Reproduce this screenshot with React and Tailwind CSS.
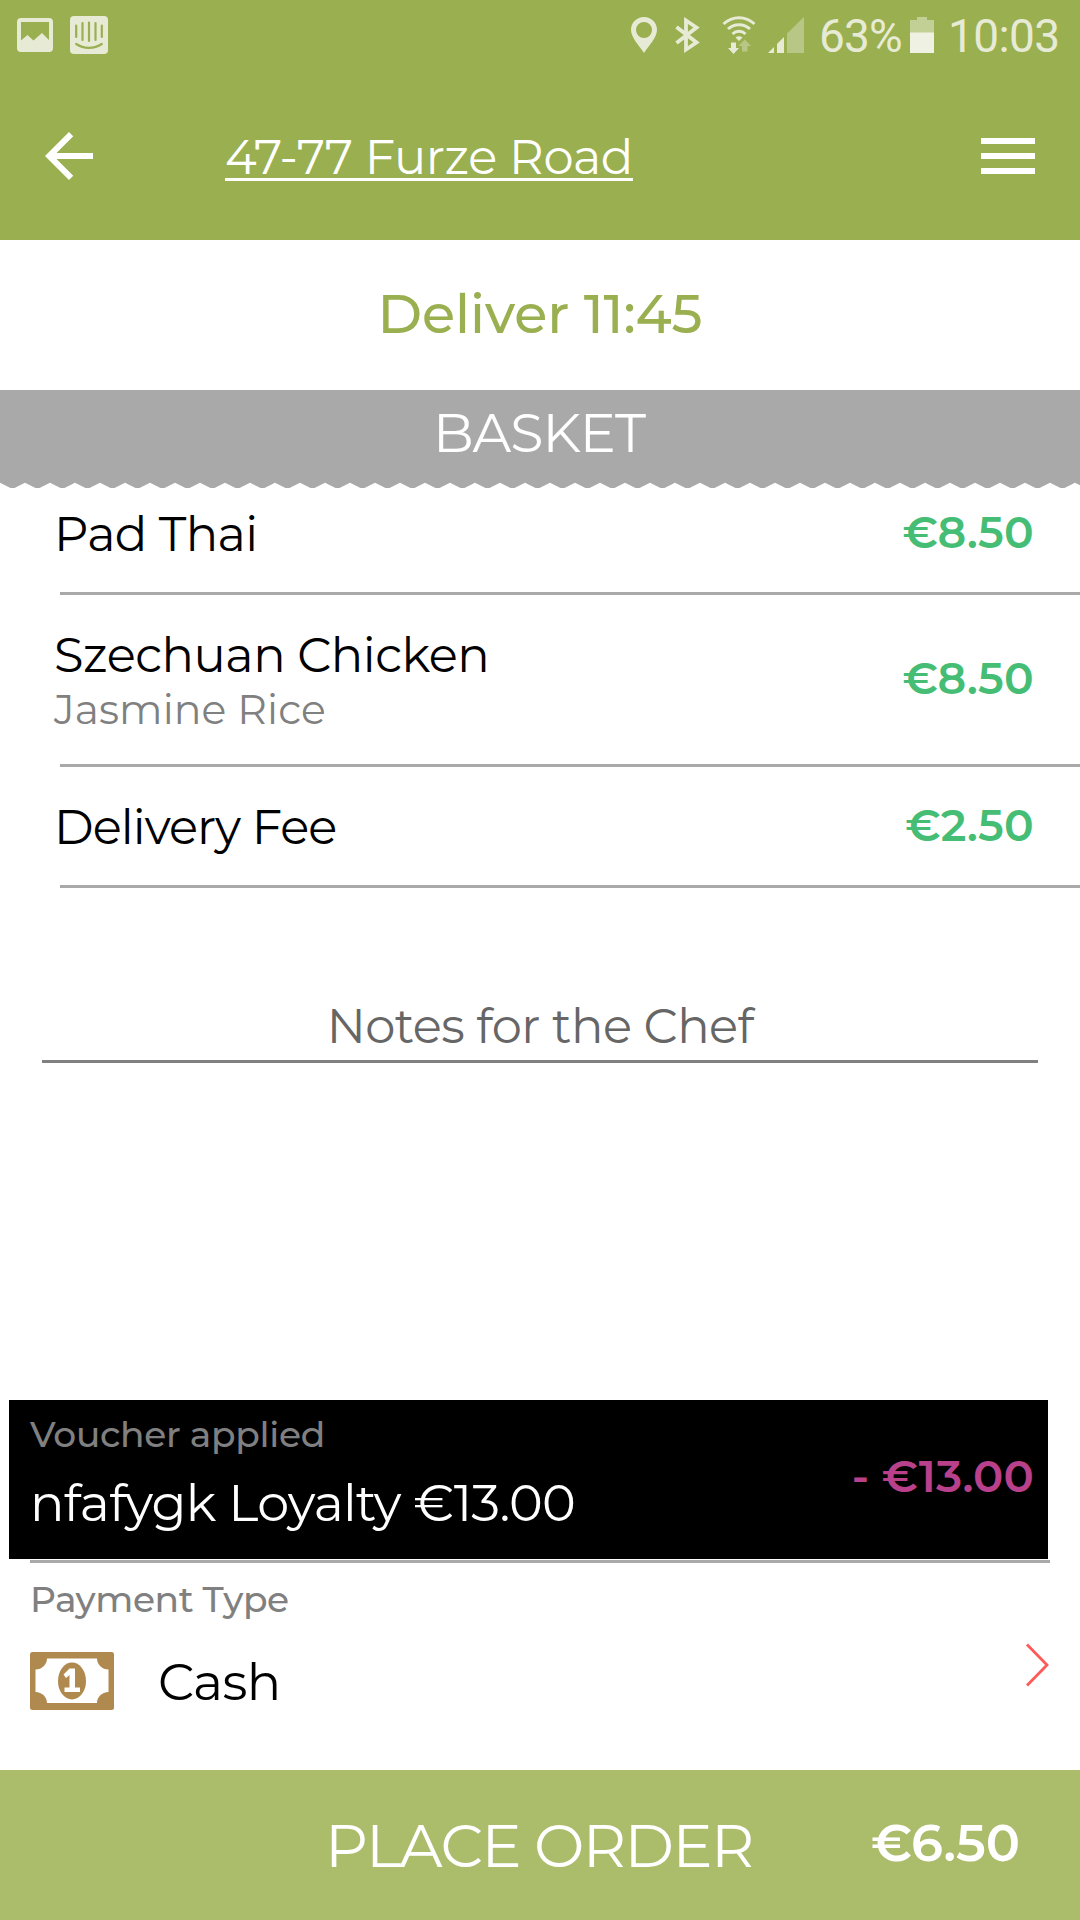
import { Fragment } from "react";

const basketItems = [
  {
    name: "Pad Thai",
    price: "€8.50",
    row: "h-[104px] pb-[13px]",
    nameStyle: "tracking-[-0.6px]",
    priceStyle: "pb-[3px]",
  },
  {
    name: "Szechuan Chicken",
    extra: "Jasmine Rice",
    price: "€8.50",
    row: "h-[169px] pb-[2px]",
    nameStyle: "tracking-[-0.45px] pt-[5px]",
    priceStyle: "pb-px",
  },
  {
    name: "Delivery Fee",
    price: "€2.50",
    row: "h-[118px] pb-0",
    nameStyle: "tracking-[-0.95px] pt-[2px]",
    priceStyle: "pb-[2px]",
  },
];

function StatusBar() {
  return (
    <div className="flex h-[72px] items-start justify-between pl-[17px] pr-[20px] pt-[15px] text-[#e7ebd5]">
      <div className="flex items-start gap-[17px]">
        {/* Picture notification */}
        <svg className="mt-[3px]" width="36" height="34" viewBox="0 0 36 34" fill="currentColor">
          <path
            fillRule="evenodd"
            d="M4 0h28a4 4 0 0 1 4 4v26a4 4 0 0 1-4 4H4a4 4 0 0 1-4-4V4a4 4 0 0 1 4-4zM4 4v18.500l6.500-5.500 6 5.500 8.500-7.500 7 7V4z"
          />
        </svg>
        {/* Chat notification */}
        <svg className="mt-[1px]" width="38" height="38" viewBox="0 0 38 38">
          <rect width="38" height="38" rx="4" fill="currentColor" />
          <g stroke="#9aaf50" strokeWidth="2.200" strokeLinecap="round" fill="none">
            <path d="M6.200 9.500v11.500M12.500 7v17M19 6.500v18.500M25.500 7v17M31.800 9.500v11.500" />
            <path d="M6.200 28c7.500 5.200 18 5.200 25.600 0" />
          </g>
        </svg>
      </div>
      <div className="flex items-start">
        {/* Location */}
        <svg className="mt-[2px]" width="26" height="36" viewBox="0 0 26 36" fill="currentColor">
          <path
            fillRule="evenodd"
            d="M13 0C5.800 0 0 5.600 0 12.800 0 20.500 8 28.500 13 36c5-7.500 13-15.500 13-23.200C26 5.600 20.200 0 13 0zm0 5a8 8 0 1 1 0 16 8 8 0 0 1 0-16z"
          />
        </svg>
        {/* Bluetooth */}
        <svg className="ml-[17px] mt-[2px]" width="26" height="36" viewBox="0 0 26 36">
          <path
            d="M2.500 10l20 15.500L12 32.500v-29l10.500 7L2.500 26"
            fill="none"
            stroke="currentColor"
            strokeWidth="3.800"
          />
        </svg>
        {/* Wifi with traffic arrows */}
        <svg className="ml-[22px] mt-[1px]" width="34" height="38" viewBox="0 0 34 38">
          <g fill="none" stroke="currentColor" strokeWidth="3">
            <path d="M1.500 8C10.500-.500 23.500-.500 32.500 8" />
            <path d="M6 13c6-5.700 16-5.700 22 0" />
            <path d="M10.500 18c3.800-3.600 9.200-3.600 13 0" />
          </g>
          <path d="M13.500 21.500c2-1.800 5-1.800 7 0L17 25z" fill="currentColor" />
          <path d="M9 26.500h5V32h3l-5.500 6L6 32h3z" fill="currentColor" />
          <path d="M20 35.500V30h-3.500l6.200-6.500L29 30h-3.500v5.500z" fill="#b9c786" />
        </svg>
        {/* Mobile signal */}
        <svg className="ml-[11px] mt-[2px]" width="38" height="36" viewBox="0 0 38 36">
          <path d="M1 36l6-6v6z" fill="currentColor" />
          <path d="M10 36V27l7-7v16z" fill="currentColor" />
          <path d="M20 36V16.500L37 0v36z" fill="#b9c786" />
        </svg>
        <span className="ml-[14px] w-[91px] whitespace-nowrap font-['Roboto',sans-serif] text-[46px] leading-[43px] tracking-[-0.8px]">
          63%
        </span>
        {/* Battery */}
        <svg className="mt-[2px]" width="24" height="36" viewBox="0 0 24 36">
          <path d="M7 0h10v3h7v13H0V3h7z" fill="#c2cf95" />
          <path d="M0 15.500h24V36H0z" fill="#eff1e3" />
        </svg>
        <span className="ml-[14px] w-[112px] whitespace-nowrap font-['Roboto',sans-serif] text-[46px] leading-[43px] tracking-[-0.6px]">
          10:03
        </span>
      </div>
    </div>
  );
}

function Header() {
  return (
    <header className="h-[240px] bg-[#9aaf50] text-white">
      <StatusBar />
      <div className="flex h-[168px] items-center pl-[33px] pr-[36px]">
        <svg width="72" height="72" viewBox="0 0 24 24" fill="currentColor">
          <path d="M20 11H7.830l5.590-5.590L12 4l-8 8 8 8 1.410-1.410L7.830 13H20z" />
        </svg>
        <h1 className="ml-[120px] flex-1 whitespace-nowrap pt-[2px] text-[48px] font-[370] leading-[60px] tracking-[-0.4px] underline decoration-[3px] underline-offset-[4px] [text-decoration-skip-ink:none]">
          47-77 Furze Road
        </h1>
        <svg width="72" height="72" viewBox="0 0 24 24" fill="currentColor">
          <path d="M3 6h18v2H3zM3 11h18v2H3zM3 16h18v2H3z" />
        </svg>
      </div>
    </header>
  );
}

function BasketTitle() {
  return (
    <div className="h-[98px]">
      <h2 className="h-[92px] bg-[#a9a9a9] pb-[6px] pr-[2px] text-center text-[54px] leading-[86px] tracking-[-1px] text-white">
        BASKET
      </h2>
      {/* Torn paper edge */}
      <svg className="block" width="1080" height="6" viewBox="0 0 1080 6">
        <defs>
          <pattern id="torn" width="25" height="6" patternUnits="userSpaceOnUse">
            <path d="M0 0h25v.800L14.500 6h-4L0 .800z" fill="#a9a9a9" />
          </pattern>
        </defs>
        <rect width="1080" height="6" fill="url(#torn)" />
      </svg>
    </div>
  );
}

function Basket() {
  return (
    <div>
      {basketItems.map((item, index) => (
        <Fragment key={index}>
          <div className={`flex items-center justify-between pl-[54px] pr-[46px] ${item.row}`}>
            <div className="whitespace-nowrap">
              <p className={`text-[48px] leading-[56px] text-black ${item.nameStyle}`}>
                {item.name}
              </p>
              {item.extra && (
                <p className="text-[41px] leading-[52px] tracking-[0.1px] text-[#808080]">
                  {item.extra}
                </p>
              )}
            </div>
            <span
              className={`text-[44px] font-semibold leading-[50px] tracking-[0.3px] text-[#45bd74] ${item.priceStyle}`}
            >
              {item.price}
            </span>
          </div>
          <div className="ml-[60px] h-[3px] bg-[#a9a9a9]" />
        </Fragment>
      ))}
    </div>
  );
}

function Voucher() {
  return (
    <div className="ml-[9px] mr-[32px] flex h-[159px] justify-between bg-black pl-[21px] pr-[14px]">
      <div className="whitespace-nowrap pt-[14px]">
        <p className="text-[36px] font-medium leading-[40px] tracking-[-0.3px] text-[#808080]">
          Voucher applied
        </p>
        <p className="mt-[19px] text-[51px] leading-[60px] tracking-[-0.7px] text-white">
          nfafygk Loyalty €13.00
        </p>
      </div>
      <span className="pt-[46px] text-[45px] font-semibold leading-[60px] tracking-[0.2px] text-[#b9408a]">
        - €13.00
      </span>
    </div>
  );
}

function PaymentType() {
  return (
    <div className="h-[207px] pl-[30px] pr-[31px] pt-[16px]">
      <p className="text-[36px] font-medium leading-[40px] tracking-[-0.4px] text-[#808080]">
        Payment Type
      </p>
      <div className="mt-[25px] flex h-[76px] items-start">
        <svg className="mt-[8px]" width="84" height="58" viewBox="0 0 84 58">
          <rect width="84" height="58" rx="2.500" fill="#b0894f" />
          <path
            d="M17 6.500h50c0 6 5 11 11.500 11v22.500c-6.500 0-11.500 5-11.500 11H17c0-6-5-11-11.500-11V17.500C12 17.500 17 12.500 17 6.500z"
            fill="#fff"
          />
          <ellipse cx="42" cy="29" rx="14" ry="18.500" fill="#b0894f" />
          <path d="M39.500 16.500H45V35.500h5V40H34.500v-4.500h5V23l-3.500 3-2.500-3.500z" fill="#fff" />
        </svg>
        <span className="ml-[44px] flex-1 text-[51px] leading-[76px] tracking-[-0.7px] text-black">
          Cash
        </span>
        <svg className="-mt-px" width="24" height="44" viewBox="0 0 24 44">
          <path d="M2 1.500L22 22 2 42.500" fill="none" stroke="#ff5a5a" strokeWidth="2.800" />
        </svg>
      </div>
    </div>
  );
}

export default function App() {
  return (
    <div className="flex h-[1920px] w-[1080px] flex-col overflow-hidden bg-white font-['Montserrat','Inter',sans-serif]">
      <Header />
      <p className="h-[150px] pb-[2px] text-center text-[54px] font-[550] leading-[148px] tracking-[-0.1px] text-[#9aaf50]">
        Deliver 11:45
      </p>
      <BasketTitle />
      <Basket />

      <div className="mx-[42px] mt-[104px] h-[71px] border-b-[3px] border-[#808080] text-center text-[48px] leading-[69px] tracking-[-0.5px] text-[#666666]">
        Notes for the Chef
      </div>

      <div className="mt-auto">
        <Voucher />
        <div className="ml-[30px] mr-[30px] mt-px h-[3px] bg-[#a9a9a9]" />
        <PaymentType />
        <button className="flex h-[150px] w-full items-start justify-between whitespace-nowrap bg-[#abbc6b] pl-[325px] pr-[60px] text-white">
          <span className="text-[60px] leading-[152px] tracking-[-1.6px]">
            PLACE ORDER
          </span>
          <span className="text-[51px] font-semibold leading-[147px]">
            €6.50
          </span>
        </button>
      </div>
    </div>
  );
}
